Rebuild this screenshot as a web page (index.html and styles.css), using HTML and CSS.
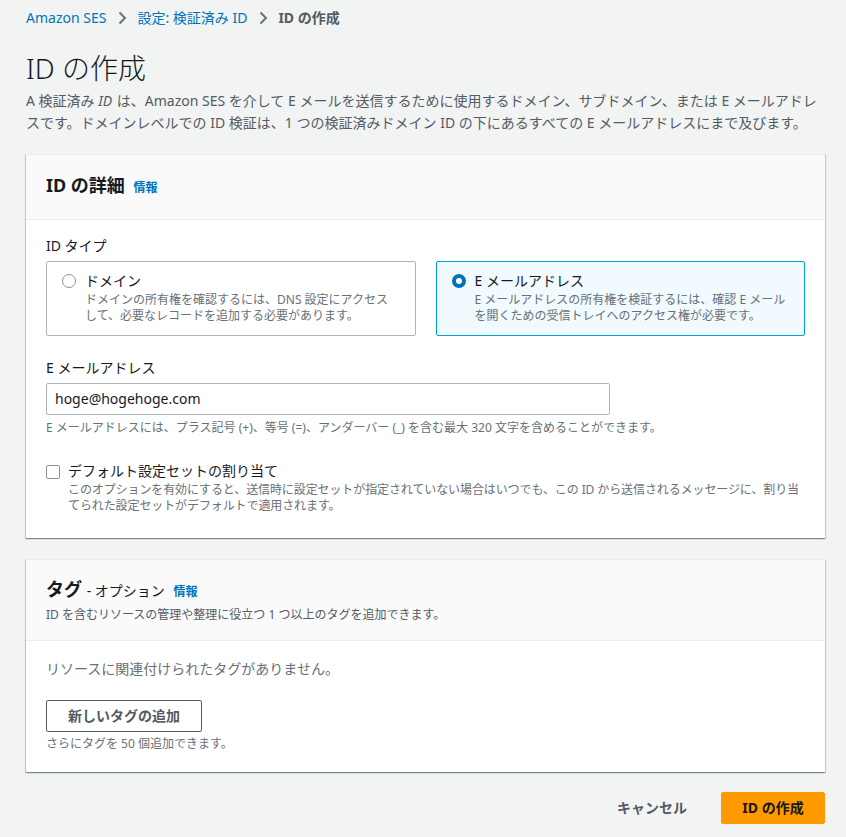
FILE: index.html
```html
<!DOCTYPE html>
<html lang="ja">
<head>
<meta charset="utf-8">
<link rel="stylesheet" href="styles.css">
</head>
<body>
<div class="page">
  <nav class="crumbs">
    <a class="crumb-link">Amazon SES</a>
    <svg class="chev" width="16" height="16" viewBox="0 0 16 16"><path d="M5.5 2.5 L11 8 L5.5 13.5" fill="none" stroke="#687078" stroke-width="2"/></svg>
    <a class="crumb-link">設定: 検証済み ID</a>
    <svg class="chev" width="16" height="16" viewBox="0 0 16 16"><path d="M5.5 2.5 L11 8 L5.5 13.5" fill="none" stroke="#687078" stroke-width="2"/></svg>
    <span class="crumb-cur">ID の作成</span>
  </nav>

  <h1 class="title">ID の作成</h1>
  <p class="desc">A 検証済み <i>ID</i>&nbsp;は、Amazon SES を介して E メールを送信するために使用するドメイン、サブドメイン、または E メールアドレスです。ドメインレベルでの ID 検証は、1 つの検証済みドメイン ID の下にあるすべての E メールアドレスにまで及びます。</p>

  <section class="card">
    <header class="card-head">
      <h2 class="card-title">ID の詳細 <span class="info">情報</span></h2>
    </header>
    <div class="card-body">
      <div class="field-label">ID タイプ</div>
      <div class="tiles">
        <label class="tile">
          <span class="radio"></span>
          <span class="tile-text">
            <span class="tile-title">ドメイン</span>
            <span class="tile-desc">ドメインの所有権を確認するには、DNS 設定にアクセスして、必要なレコードを追加する必要があります。</span>
          </span>
        </label>
        <label class="tile tile-on">
          <span class="radio radio-on"></span>
          <span class="tile-text">
            <span class="tile-title">E メールアドレス</span>
            <span class="tile-desc">E メールアドレスの所有権を検証するには、確認 E メールを開くための受信トレイへのアクセス権が必要です。</span>
          </span>
        </label>
      </div>

      <div class="field-label field-gap">E メールアドレス</div>
      <div class="input">hoge@hogehoge.com</div>
      <div class="hint">E メールアドレスには、プラス記号 (+)、等号 (=)、アンダーバー (_) を含む最大 320 文字を含めることができます。</div>

      <div class="check-row">
        <span class="checkbox"></span>
        <div class="check-text">
          <div class="check-title">デフォルト設定セットの割り当て</div>
          <div class="check-desc">このオプションを有効にすると、送信時に設定セットが指定されていない場合はいつでも、この ID から送信されるメッセージに、割り当てられた設定セットがデフォルトで適用されます。</div>
        </div>
      </div>
    </div>
  </section>

  <section class="card card2">
    <header class="card-head head2">
      <h2 class="card-title">タグ <span class="opt">- オプション</span> <span class="info">情報</span></h2>
      <div class="head-desc">ID を含むリソースの管理や整理に役立つ 1 つ以上のタグを追加できます。</div>
    </header>
    <div class="card-body body2">
      <div class="empty">リソースに関連付けられたタグがありません。</div>
      <button class="btn">新しいタグの追加</button>
      <div class="hint hint2">さらにタグを 50 個追加できます。</div>
    </div>
  </section>

  <div class="actions">
    <button class="btn-link">キャンセル</button>
    <button class="btn-primary">ID の作成</button>
  </div>
</div>
</body>
</html>
```

FILE: styles.css
```css
* { box-sizing: border-box; }
html, body { margin: 0; padding: 0; }
body {
  background: #f2f3f3;
  font-family: "Noto Sans", "Noto Sans CJK JP", sans-serif;
  color: #16191f;
  font-size: 14px;
  line-height: 22px;
}
.page {
  padding: 7px 21px 0 26px;
}
.crumbs {
  display: flex;
  align-items: center;
  height: 22px;
  font-size: 14px;
}
.crumb-link { color: #0073bb; }
.chev { margin: 0 7px 0 8px; }
.crumb-cur { color: #545b64; font-weight: 700; }
.title {
  margin: 22px 0 0 0;
  font-size: 28px;
  line-height: 34px;
  font-weight: 300;
  color: #16191f;
}
.desc {
  margin: 5px 0 0 0;
  color: #545b64;
  font-size: 14px;
  line-height: 22px;
}
.desc i { font-style: italic; padding-right: 1px; }
.card {
  margin-top: 20px;
  background: #fff;
  box-shadow: 0 1px 1px 0 rgba(0,28,36,.3), 1px 1px 1px 0 rgba(0,28,36,.15), -1px 1px 1px 0 rgba(0,28,36,.15);
  border-top: 1px solid #eaeded;
}
.card2 { margin-top: 21px; }
.card-head {
  background: #fafafa;
  border-bottom: 1px solid #eaeded;
  padding: 17px 20px 18px;
}
.card-title {
  margin: 0;
  font-size: 18px;
  line-height: 26px;
  font-weight: 700;
}
.info {
  font-size: 12px;
  color: #0073bb;
  font-weight: 700;
  margin-left: 4px;
}
.opt {
  font-size: 14px;
  font-weight: 400;
}
.head2 { padding: 16px 20px 17px; }
.head-desc {
  font-size: 12px;
  line-height: 16px;
  color: #545b64;
  margin-top: 2px;
}
.card-body { padding: 15px 20px 24px; }
.field-label { font-size: 14px; line-height: 22px; }
.field-gap { margin-top: 21px; }
.tiles {
  display: grid;
  grid-template-columns: 1fr 1fr;
  gap: 20px;
  margin-top: 4px;
}
.tile {
  display: flex;
  border: 1px solid #aab7b8;
  border-radius: 2px;
  padding: 8px 16px 11px 15px;
  gap: 9px;
}
.tile-on {
  border-color: #00a1c9;
  background: #f1faff;
}
.radio {
  flex: none;
  width: 14px;
  height: 14px;
  border-radius: 50%;
  border: 1.5px solid #879596;
  margin-top: 4px;
  background: #fff;
}
.radio-on {
  border: 4px solid #0073bb;
}
.tile-text { display: flex; flex-direction: column; }
.tile-title { font-size: 14px; line-height: 22px; }
.tile-desc {
  font-size: 12px;
  line-height: 16px;
  color: #687078;
}
.input {
  margin-top: 4px;
  width: 564px;
  height: 32px;
  border: 1px solid #aab7b8;
  border-radius: 2px;
  padding: 4px 8px;
  font-size: 14px;
  line-height: 22px;
  background: #fff;
}
.hint {
  font-size: 12px;
  line-height: 16px;
  color: #687078;
  margin-top: 5px;
}
.check-row {
  display: flex;
  gap: 8px;
  margin-top: 24px;
}
.checkbox {
  flex: none;
  width: 14px;
  height: 14px;
  border: 1px solid #879596;
  border-radius: 2px;
  margin-top: 5px;
  background: #fff;
}
.check-title { font-size: 14px; line-height: 22px; }
.check-desc {
  font-size: 12px;
  line-height: 16px;
  color: #687078;
  letter-spacing: -0.1px;
}
.body2 { padding: 17px 20px 20px; }
.empty {
  color: #687078;
  font-size: 14px;
  line-height: 22px;
}
.btn {
  display: block;
  margin-top: 20px;
  height: 32px;
  padding: 0 21px;
  border: 1px solid #545b64;
  border-radius: 2px;
  background: #fff;
  color: #545b64;
  font-family: inherit;
  font-size: 14px;
  font-weight: 700;
  line-height: 22px;
}
.hint2 { margin-top: 4px; }
.actions {
  display: flex;
  justify-content: flex-end;
  align-items: center;
  gap: 17px;
  margin-top: 20px;
  padding-bottom: 14px;
}
.btn-link, .btn-primary {
  font-family: inherit;
  font-size: 14px;
  font-weight: 700;
  line-height: 22px;
  height: 32px;
  border-radius: 2px;
  cursor: pointer;
}
.btn-link {
  background: transparent;
  border: 1px solid transparent;
  color: #545b64;
  padding: 0 16px;
}
.btn-primary {
  background: #ff9900;
  border: 1px solid #ff9900;
  color: #16191f;
  padding: 0 20px;
  width: 104px;
}
```
